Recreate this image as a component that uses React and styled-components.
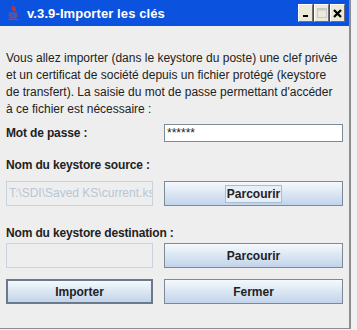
import React from "react";
import styled, { createGlobalStyle } from "styled-components";

const Global = createGlobalStyle`
  html, body {
    margin: 0;
    padding: 0;
    background: #f0f0f0;
  }
`;

export default function App() {
  return (
    <>
      <Global />
      <Frame>
        <TitleBar>
          <JavaIcon />
          <Title>v.3.9-Importer les clés</Title>
          <Controls>
            <CtlButton>
              <svg width="8" height="8" viewBox="0 0 8 8">
                <rect x="1" y="6" width="5" height="2" fill="#000" />
              </svg>
            </CtlButton>
            <CtlButton>
              <svg width="10" height="10" viewBox="0 0 10 10">
                <rect x="0.5" y="0.5" width="9" height="9" fill="none" stroke="#c8c8c8" />
                <rect x="0.5" y="0.5" width="9" height="2" fill="#c8c8c8" />
              </svg>
            </CtlButton>
            <CtlButton>
              <svg width="9" height="9" viewBox="0 0 9 9">
                <path d="M1 1 L8 8 M8 1 L1 8" stroke="#000" strokeWidth="2.2" />
              </svg>
            </CtlButton>
          </Controls>
        </TitleBar>
        <Body>
          <Intro>
            Vous allez importer (dans le keystore du poste) une clef privée
            et un certificat de société depuis un fichier protégé (keystore
            de transfert). La saisie du mot de passe permettant d'accéder
            à ce fichier est nécessaire :
          </Intro>
          <PassRow>
            <Label>Mot de passe :</Label>
            <Field>******</Field>
          </PassRow>
          <Label $top={15}>Nom du keystore source :</Label>
          <Row $top={7}>
            <Field $disabled>T:\SDI\Saved KS\current.ks</Field>
            <Button $focused>
              <span>Parcourir</span>
            </Button>
          </Row>
          <Label $top={19}>Nom du keystore destination :</Label>
          <Row $top={1}>
            <Field $disabled />
            <Button>
              <span>Parcourir</span>
            </Button>
          </Row>
          <Row $top={11}>
            <Button $default>
              <span>Importer</span>
            </Button>
            <Button>
              <span>Fermer</span>
            </Button>
          </Row>
        </Body>
      </Frame>
    </>
  );
}

function JavaIcon() {
  return (
    <svg width="14" height="16" viewBox="0 0 14 16">
      <path d="M7 1 C5 3 9 4 7 6 M9 2 C8 3.5 10 4.5 8.5 6" stroke="#e03020" strokeWidth="1.4" fill="none" />
      <path d="M3 8 H11 M2.5 10 H11.5 M3 12 H11" stroke="#3a62c8" strokeWidth="1.3" />
      <path d="M4 8 V13 H10 V8" stroke="#e03020" strokeWidth="1" fill="none" />
      <path d="M1.5 14.5 H12.5" stroke="#3a62c8" strokeWidth="1.2" />
    </svg>
  );
}

const Frame = styled.div`
  width: 351px;
  height: 329px;
  box-sizing: border-box;
  background: #eeeeee;
  border-right: 2px solid #8d8d8d;
  border-bottom: 1px solid #8d8d8d;
  display: flex;
  flex-direction: column;
  font-family: "Liberation Sans", Arial, sans-serif;
`;

const TitleBar = styled.div`
  height: 26px;
  background: #0b53de;
  display: flex;
  align-items: center;
  padding: 0 4px 0 6px;
  color: #fff;
`;

const Title = styled.div`
  margin-left: 7px;
  font-size: 13px;
  font-weight: bold;
  letter-spacing: 0.1px;
  flex: 1;
`;

const Controls = styled.div`
  display: flex;
  gap: 1px;
`;

const CtlButton = styled.div`
  width: 15px;
  height: 18px;
  box-sizing: border-box;
  background: #ece9d8;
  border: 1px solid;
  border-color: #fff #6e6e6e #6e6e6e #fff;
  display: flex;
  align-items: center;
  justify-content: center;
`;

const Body = styled.div`
  padding: 24px 7px 0 6px;
  display: flex;
  flex-direction: column;
`;

const Intro = styled.p`
  margin: 0;
  font-size: 12px;
  line-height: 17px;
  color: #222;
`;

const Label = styled.div`
  margin-top: ${(p) => p.$top || 0}px;
  font-size: 12px;
  line-height: 17px;
  font-weight: bold;
  letter-spacing: -0.15px;
  color: #222;
`;

const PassRow = styled.div`
  margin-top: 6px;
  display: grid;
  grid-template-columns: 147px 179px;
  column-gap: 11px;
  align-items: center;
  height: 18px;
`;

const Row = styled.div`
  margin-top: ${(p) => p.$top || 0}px;
  display: grid;
  grid-template-columns: 147px 179px;
  column-gap: 11px;
  height: 25px;
`;

const Field = styled.div`
  box-sizing: border-box;
  height: 100%;
  background: ${(p) => (p.$disabled ? "#eeeeee" : "#ffffff")};
  border: 1px solid ${(p) => (p.$disabled ? "#c9d3de" : "#7a8a99")};
  padding: 0 2px;
  font-size: 12px;
  line-height: ${(p) => (p.$disabled ? "23px" : "16px")};
  color: ${(p) => (p.$disabled ? "#b8c6d6" : "#222")};
  white-space: nowrap;
  overflow: hidden;
`;

const Button = styled.div`
  box-sizing: border-box;
  height: 100%;
  border: ${(p) => (p.$default ? "2px solid #6a7a8a" : "1px solid #7a8a99")};
  background: linear-gradient(#f6f9fd, #dde8f4 45%, #c2d4ea);
  display: flex;
  align-items: center;
  justify-content: center;
  font-size: 12px;
  font-weight: bold;
  color: #222;

  span {
    padding: 1px 1px;
    border: 1px solid ${(p) => (p.$focused ? "#a8bcd2" : "transparent")};
    background: ${(p) => (p.$focused ? "#e8eef6" : "transparent")};
  }
`;
